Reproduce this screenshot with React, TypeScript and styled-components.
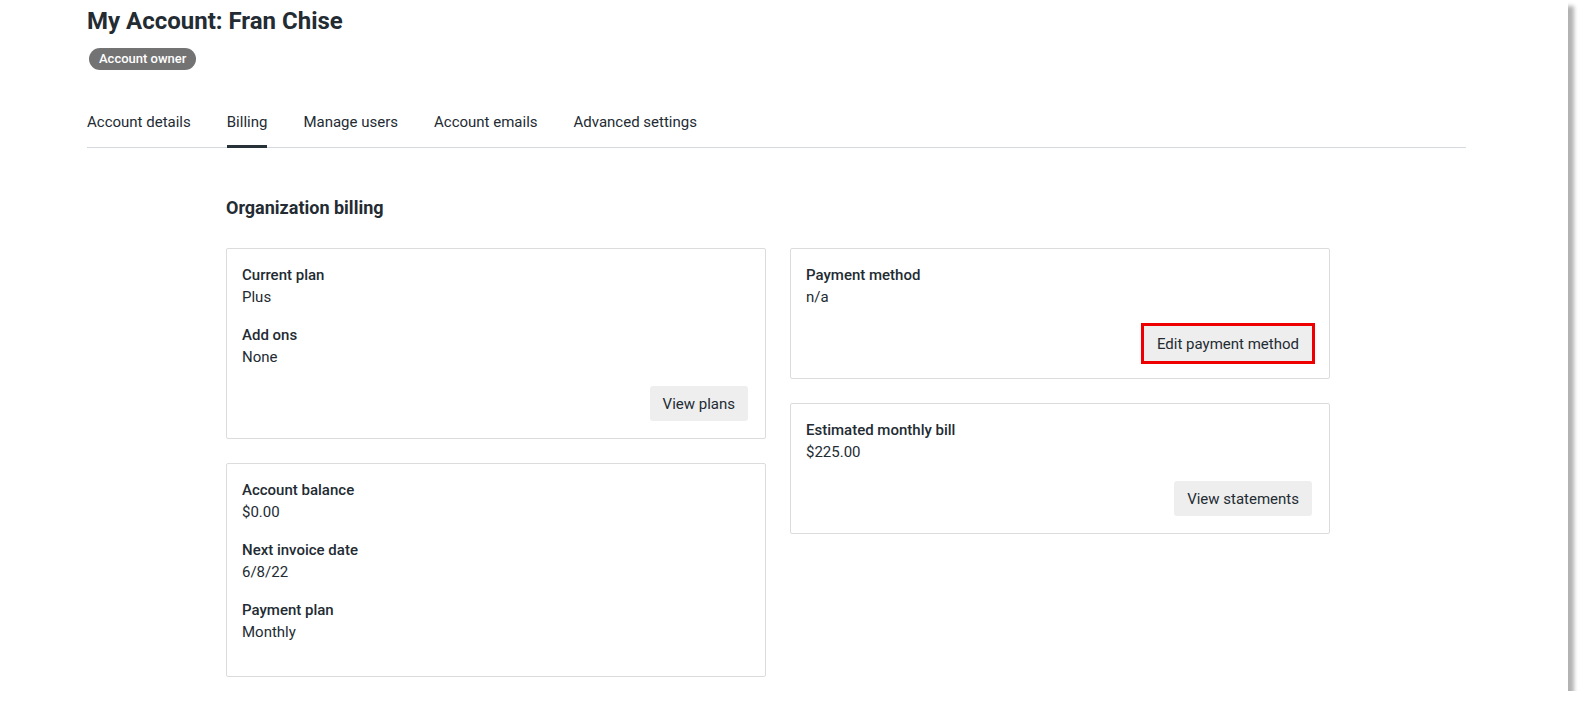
import React from 'react';
import styled, {createGlobalStyle} from "styled-components";

const GlobalStyle = createGlobalStyle`
  html, body {
    margin: 0;
    padding: 0;
    background: #ffffff;
  }
  body {
    font-family: Roboto, "Liberation Sans", sans-serif;
    color: #232b33;
  }
`

type Field = { label: string, value: string }

const tabs = ['Account details', 'Billing', 'Manage users', 'Account emails', 'Advanced settings']

export default function App() {
	return (
		<>
			<GlobalStyle/>
			<Frame>
				<Header>
					<Title>My Account: Fran Chise</Title>
					<Badge>Account owner</Badge>
				</Header>

				<Tabs>
					{tabs.map(t => (
						<Tab key={t} active={t === 'Billing'}>{t}</Tab>
					))}
				</Tabs>

				<Section>
					<SectionTitle>Organization billing</SectionTitle>
					<Columns>
						<Column>
							<Card fields={[{label: 'Current plan', value: 'Plus'}, {label: 'Add ons', value: 'None'}]}
							      button="View plans"/>
							<Card fields={[
								{label: 'Account balance', value: '$0.00'},
								{label: 'Next invoice date', value: '6/8/22'},
								{label: 'Payment plan', value: 'Monthly'},
							]}/>
						</Column>
						<Column>
							<Card fields={[{label: 'Payment method', value: 'n/a'}]} button="Edit payment method" highlight/>
							<Card fields={[{label: 'Estimated monthly bill', value: '$225.00'}]} button="View statements"/>
						</Column>
					</Columns>
				</Section>
			</Frame>
		</>
	);
}

const Card = ({fields, button, highlight}: { fields: Field[], button?: string, highlight?: boolean }) => (
	<StyledCard>
		{fields.map(f => (
			<FieldBlock key={f.label}>
				<Label>{f.label}</Label>
				<Value>{f.value}</Value>
			</FieldBlock>
		))}
		{button && (
			<Actions>
				<Button highlight={highlight}>{button}</Button>
			</Actions>
		)}
	</StyledCard>
)

const Frame = styled.div`
  box-sizing: border-box;
  width: 1568px;
  height: 691px;
  background: #ffffff;
  box-shadow: 6px 6px 4px rgba(0, 0, 0, 0.3);
  overflow: hidden;
  padding: 6px 0 0 87px;
`
const Header = styled.div`
  display: flex;
  flex-direction: column;
  align-items: flex-start;
  gap: 12px;
`
const Title = styled.h1`
  margin: 0;
  font-size: 24px;
  line-height: 30px;
  font-weight: 700;
  color: #232b33;
`
const Badge = styled.span`
  margin-left: 2px;
  background: #737373;
  color: #ffffff;
  font-size: 13px;
  font-weight: 500;
  line-height: 22px;
  padding: 0 10px;
  border-radius: 11px;
`
const Tabs = styled.nav`
  display: flex;
  gap: 36px;
  width: 1379px;
  margin-top: 40px;
  border-bottom: 1px solid #d3d9df;
`
const Tab = styled.div<{ active?: boolean }>`
  font-size: 15px;
  line-height: 20px;
  padding: 2px 0 13px;
  color: #232b33;
  border-bottom: 3px solid ${p => p.active ? '#263238' : 'transparent'};
  margin-bottom: -1px;
`
const Section = styled.section`
  margin-left: 139px;
  width: 1103px;
`
const SectionTitle = styled.h2`
  margin: 48px 0 0;
  font-size: 18px;
  line-height: 24px;
  font-weight: 700;
  color: #232b33;
`
const Columns = styled.div`
  display: grid;
  grid-template-columns: 540px 540px;
  gap: 24px;
  margin-top: 28px;
  align-items: start;
`
const Column = styled.div`
  display: flex;
  flex-direction: column;
  gap: 24px;
`
const StyledCard = styled.div`
  border: 1px solid #dcdcdc;
  border-radius: 2px;
  padding: 15px 17px 17px 15px;
`
const FieldBlock = styled.div`
  margin-bottom: 16px;
`
const Label = styled.div`
  font-size: 15px;
  line-height: 22px;
  font-weight: 500;
  color: #232b33;
`
const Value = styled.div`
  font-size: 15px;
  line-height: 22px;
  color: #232b33;
`
const Actions = styled.div`
  display: flex;
  justify-content: flex-end;
  margin-top: 18px;
`
const Button = styled.button<{ highlight?: boolean }>`
  font-family: Roboto, "Liberation Sans", sans-serif;
  font-size: 15px;
  color: #232b33;
  background: #eeeeee;
  border: none;
  border-radius: ${p => p.highlight ? '0' : '3px'};
  height: 35px;
  padding: 0 13px;
  outline: ${p => p.highlight ? '3px solid #ee0000' : 'none'};
  outline-offset: 0;
`
